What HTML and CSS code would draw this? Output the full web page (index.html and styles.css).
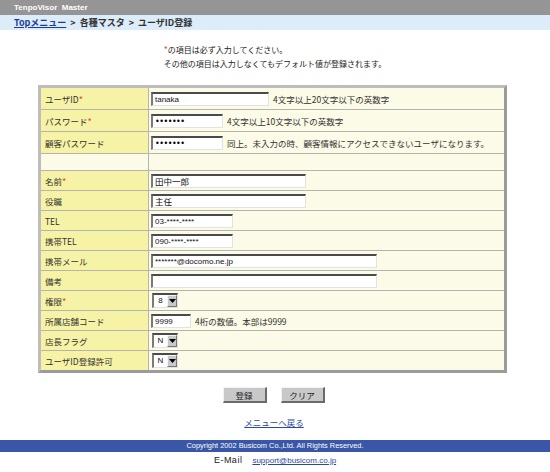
FILE: index.html
```html
<!DOCTYPE html>
<html lang="ja">
<head>
<meta charset="utf-8">
<title>ユーザID登録</title>
<link rel="stylesheet" href="styles.css">
</head>
<body>
<div class="titlebar">TenpoVisor&nbsp; Master</div>
<div class="crumbs"><a href="#" class="crumb-link">Topメニュー</a><span class="sep">&gt;</span>各種マスタ<span class="sep">&gt;</span>ユーザID登録</div>

<div class="notes">
  <div class="notes-inner">
    <div><span class="req">*</span>の項目は必ず入力してください。</div>
    <div>その他の項目は入力しなくてもデフォルト値が登録されます。</div>
  </div>
</div>

<form class="form">
<table class="grid">
  <tr class="tall">
    <th>ユーザID<span class="req">*</span></th>
    <td><input class="in w-id" type="text" value="tanaka"><span class="hint">4文字以上20文字以下の英数字</span></td>
  </tr>
  <tr class="tall">
    <th>パスワード<span class="req">*</span></th>
    <td><input class="in w-pw" type="password" value="1234567"><span class="hint">4文字以上10文字以下の英数字</span></td>
  </tr>
  <tr class="tall">
    <th>顧客パスワード</th>
    <td><input class="in w-pw" type="password" value="1234567"><span class="hint">同上。未入力の時、顧客情報にアクセスできないユーザになります。</span></td>
  </tr>
  <tr class="blank">
    <th class="empty"></th>
    <td></td>
  </tr>
  <tr>
    <th>名前<span class="req">*</span></th>
    <td><input class="in w-name jp" type="text" value="田中一郎"></td>
  </tr>
  <tr>
    <th>役職</th>
    <td><input class="in w-name jp" type="text" value="主任"></td>
  </tr>
  <tr>
    <th>TEL</th>
    <td><input class="in w-tel" type="text" value="03-****-****"></td>
  </tr>
  <tr>
    <th>携帯TEL</th>
    <td><input class="in w-tel" type="text" value="090-****-****"></td>
  </tr>
  <tr>
    <th>携帯メール</th>
    <td><input class="in w-mail" type="text" value="*******@docomo.ne.jp"></td>
  </tr>
  <tr>
    <th>備考</th>
    <td><input class="in w-mail" type="text" value=""></td>
  </tr>
  <tr>
    <th>権限<span class="req">*</span></th>
    <td><span class="sel"><span class="sel-val">8</span><span class="sel-btn"><svg width="7" height="4" viewBox="0 0 7 4"><path d="M0 0H7L3.5 4Z" fill="#000"/></svg></span></span></td>
  </tr>
  <tr>
    <th>所属店舗コード</th>
    <td><input class="in w-code" type="text" value="9999"><span class="hint">4桁の数値。本部は9999</span></td>
  </tr>
  <tr>
    <th>店長フラグ</th>
    <td><span class="sel"><span class="sel-val">N</span><span class="sel-btn"><svg width="7" height="4" viewBox="0 0 7 4"><path d="M0 0H7L3.5 4Z" fill="#000"/></svg></span></span></td>
  </tr>
  <tr>
    <th>ユーザID登録許可</th>
    <td><span class="sel"><span class="sel-val">N</span><span class="sel-btn"><svg width="7" height="4" viewBox="0 0 7 4"><path d="M0 0H7L3.5 4Z" fill="#000"/></svg></span></span></td>
  </tr>
</table>

<div class="buttons">
  <button type="button" class="btn">登録</button>
  <button type="button" class="btn">クリア</button>
</div>
</form>

<div class="back"><a href="#" class="back-link">メニューへ戻る</a></div>

<div class="copyright">Copyright 2002 Busicom Co.,Ltd. All Rights Reserved.</div>
<div class="mail"><span class="mail-label">E-Mail</span><a href="#" class="mail-link">support@busicom.co.jp</a></div>
</body>
</html>
```

FILE: styles.css
```css
html, body {
  margin: 0;
  padding: 0;
  background: #ffffff;
}

body {
  font-family: "Noto Sans CJK JP", "Liberation Sans", sans-serif;
  color: #222;
  width: 550px;
}

.titlebar {
  height: 15px;
  background: #959595;
  color: #ffffff;
  font-family: "Liberation Sans", sans-serif;
  font-weight: bold;
  font-size: 8px;
  line-height: 15px;
  padding-left: 14px;
  white-space: nowrap;
}

.crumbs {
  height: 15px;
  background: #dcecf9;
  color: #333;
  font-weight: bold;
  font-size: 9px;
  line-height: 15px;
  padding-left: 14px;
  white-space: nowrap;
}

.crumb-link {
  color: #1a3a9c;
  text-decoration: underline;
}

.sep {
  margin: 0 4px;
}

.notes {
  text-align: center;
  margin-top: 13px;
}

.notes-inner {
  display: inline-block;
  text-align: left;
  font-size: 8px;
  line-height: 14px;
  color: #222;
}

.req {
  color: #e0522a;
  font-size: 1.1em;
}

.form {
  margin: 0;
}

.grid {
  margin: 13px 0 0 38px;
  width: 469px;
  border-collapse: separate;
  border-spacing: 0;
  border-style: solid;
  border-width: 3px;
  border-color: #bdbdbd #9b9b9b #9b9b9b #bdbdbd;
  background: #fbfbe7;
  font-size: 8.5px;
}

.grid th,
.grid td {
  box-sizing: border-box;
  height: 20px;
  padding: 0 2px;
  border-bottom: 1px solid #b5b5b0;
  text-align: left;
  vertical-align: middle;
  white-space: nowrap;
  line-height: 12px;
}

.grid tr:last-child th,
.grid tr:last-child td {
  border-bottom: none;
  height: 19px;
}

.grid th {
  width: 108px;
  padding-left: 4px;
  background: #f6f2a6;
  border-right: 1px solid #b5b5b0;
  font-weight: normal;
  color: #333;
}

.grid th.empty {
  background: #fbfbe7;
}

.grid tr.tall th,
.grid tr.tall td {
  height: 22px;
}

.grid tr.blank th,
.grid tr.blank td {
  height: 17px;
}

.in {
  box-sizing: border-box;
  height: 14px;
  margin: 0;
  padding: 0 2px;
  vertical-align: middle;
  border-style: solid;
  border-width: 2px 1px 1px 2px;
  border-color: #4a4a4a #e2e2e2 #e2e2e2 #7a7a7a;
  background: #ffffff;
  font-family: "Liberation Sans", sans-serif;
  font-size: 8px;
  color: #111;
  outline: none;
}

.in.jp {
  font-family: "Noto Sans CJK JP", sans-serif;
  font-size: 8.5px;
}

.in[type="password"] {
  font-family: "DejaVu Sans", sans-serif;
  font-size: 8px;
  letter-spacing: -0.5px;
  line-height: 10px;
  color: #000;
}

.w-id { width: 118px; }
.w-pw { width: 72px; }
.w-name { width: 155px; }
.w-tel { width: 82px; }
.w-mail { width: 226px; }
.w-code { width: 40px; }

.hint {
  margin-left: 4px;
  vertical-align: middle;
  color: #333;
}

.sel {
  display: inline-flex;
  box-sizing: border-box;
  width: 26px;
  height: 15px;
  margin-left: 1px;
  vertical-align: middle;
  border-style: solid;
  border-width: 2px 1px 1px 2px;
  border-color: #4a4a4a #e2e2e2 #e2e2e2 #7a7a7a;
  background: #ffffff;
}

.sel-val {
  flex: 1;
  text-align: center;
  font-family: "Liberation Sans", sans-serif;
  font-size: 8px;
  line-height: 12px;
  color: #111;
}

.sel-btn {
  box-sizing: border-box;
  width: 10px;
  display: flex;
  align-items: center;
  justify-content: center;
  background: #c8c8c8;
  border-style: solid;
  border-width: 1px;
  border-color: #f4f4f4 #777 #777 #f4f4f4;
}

.buttons {
  display: flex;
  justify-content: center;
  gap: 14px;
  margin-top: 14px;
  padding-right: 3px;
}

.btn {
  box-sizing: border-box;
  width: 44px;
  height: 16px;
  margin: 0;
  padding: 0;
  background: #c8c8c8;
  border-style: solid;
  border-width: 1px 2px 2px 1px;
  border-color: #f2f2f2 #6a6a6a #6a6a6a #f2f2f2;
  font-family: "Noto Sans CJK JP", sans-serif;
  font-size: 8.5px;
  line-height: 12px;
  color: #222;
}

.back {
  text-align: center;
  margin-top: 13px;
  font-size: 8.5px;
  line-height: 12px;
  padding-right: 2px;
}

.back-link {
  color: #2b48a8;
  text-decoration: underline;
}

.copyright {
  margin-top: 12px;
  height: 12px;
  background: #3a56a6;
  color: #ffffff;
  text-align: center;
  font-family: "Liberation Sans", sans-serif;
  font-size: 7.4px;
  line-height: 12px;
  white-space: nowrap;
}

.mail {
  margin-top: 2px;
  text-align: center;
  font-family: "Liberation Sans", sans-serif;
  font-size: 8px;
  line-height: 12px;
  color: #222;
}

.mail-label {
  font-size: 9px;
  letter-spacing: 0.5px;
  margin-right: 10px;
}

.mail-link {
  color: #2b48a8;
  text-decoration: underline;
}
```
